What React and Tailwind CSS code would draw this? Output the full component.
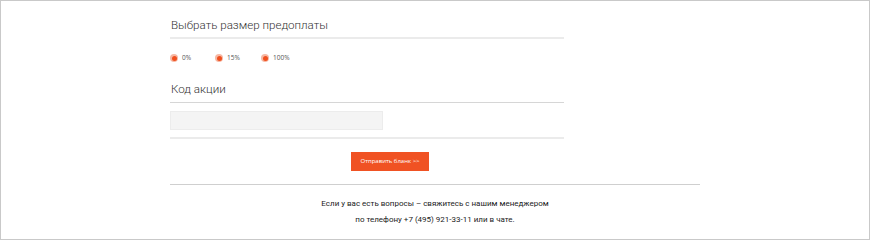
export default function App() {
  const radios = ["0%", "15%", "100%"];
  return (
    <div className="w-[870px] h-[240px] border border-[#c9c9c9] bg-white overflow-hidden" style={{ fontFamily: 'Roboto, "Open Sans", sans-serif' }}>
      <div className="w-[530px] mx-auto pt-[15px]">
        <div className="w-[394px]">
          <div className="text-[11.6px] leading-[18px] font-light text-[#333] pl-[1px]">Выбрать размер предоплаты</div>
          <div className="mt-[3px] h-[2px] bg-[#ebebeb]" />
          <div className="flex items-center mt-[15px] h-[8px]">
            {radios.map((r, i) => (
              <div key={r} className={"flex items-center " + (i === 0 ? "w-[45px]" : i === 1 ? "w-[46px]" : "")}>
                <span className="w-[8px] h-[8px] rounded-full bg-[#f6b8a4] flex items-center justify-center">
                  <span className="w-[5px] h-[5px] rounded-full bg-[#f0501f]" />
                </span>
                <span className="ml-[4px] text-[6.5px] text-[#555]" style={{ fontFamily: '"Open Sans", sans-serif' }}>{r}</span>
              </div>
            ))}
          </div>
          <div className="mt-[18px] text-[11.6px] leading-[18px] font-light text-[#333] pl-[1px]">Код акции</div>
          <div className="mt-[4px] h-[1px] bg-[#d6d6d6]" />
          <div className="mt-[8px] w-[213px] h-[19px] bg-[#f4f4f4] border border-[#ececec]" />
          <div className="mt-[7px] h-[2px] bg-[#ebebeb]" />
          <div className="flex mt-[13px] pl-[181px]">
            <button className="w-[78px] h-[19px] bg-[#f05223] text-white text-[6px] flex items-center justify-center" style={{ fontFamily: '"Open Sans", sans-serif' }}>Отправить бланк &gt;&gt;</button>
          </div>
        </div>
        <div className="mt-[13px] h-[1px] bg-[#cfcfcf]" />
        <div className="mt-[11px] text-center text-[8px] leading-[16px] text-[#222]">
          <div>Если у вас есть вопросы – свяжитесь с нашим менеджером</div>
          <div>по телефону +7 (495) 921-33-11 или в чате.</div>
        </div>
      </div>
    </div>
  );
}
